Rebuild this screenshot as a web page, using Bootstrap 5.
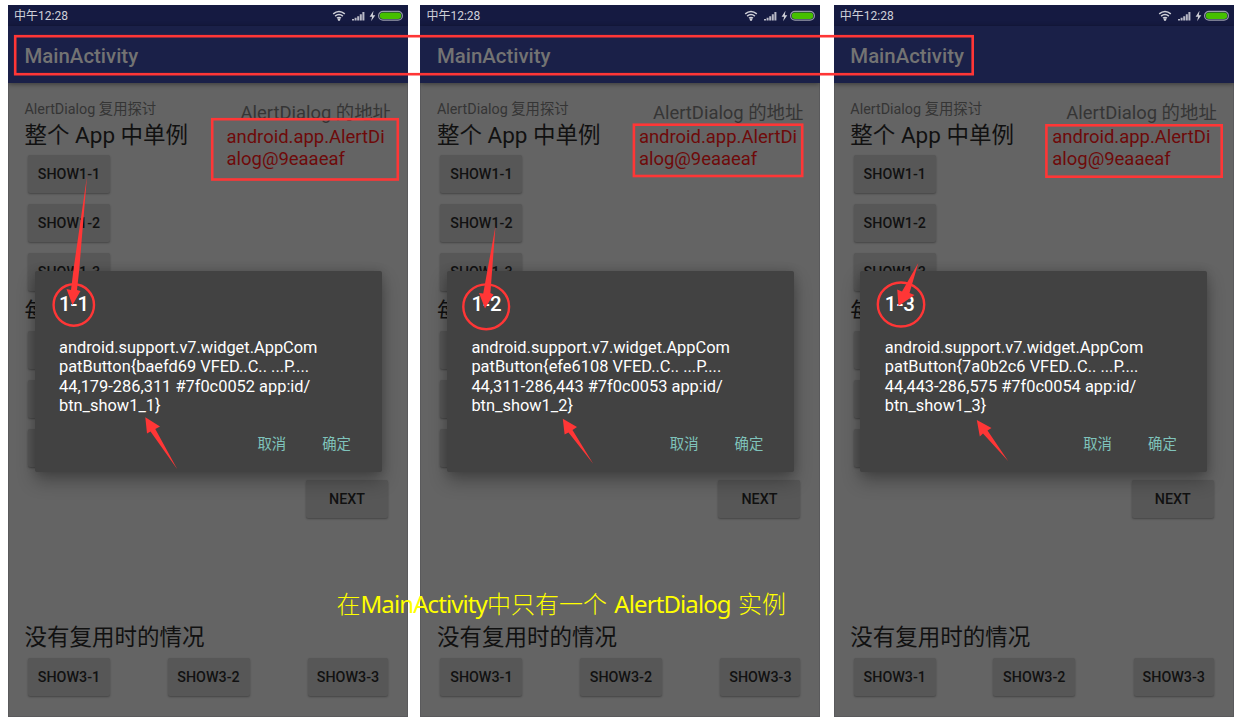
<!DOCTYPE html>
<html lang="zh-CN">
<head>
<meta charset="utf-8">
<meta name="viewport" content="width=device-width, initial-scale=1">
<title>MainActivity</title>
<link href="https://cdn.jsdelivr.net/npm/bootstrap@5.3.0/dist/css/bootstrap.min.css" rel="stylesheet">
<style>
body{background:#fff;font-family:Roboto,"Noto Sans CJK SC",sans-serif;color:#111;height:725px;overflow:hidden}
.board{width:1240px;height:725px;padding:5px 0 0 8px;gap:13px}
.phone{width:400px;height:712px;background:#646464;flex:none;overflow:hidden;box-shadow:inset 0 0 0 1px #5a5a5c}
.phone-b{margin:0 .4px 0 -.6px}
.statusbar{height:21px;background:#151a41;color:#cfd0d8;font-size:12px;line-height:21px;padding:1px 4px 0 6px}
.appbar{height:57px;background:#1a2048;color:#737373;font-size:20.4px;font-weight:500;padding:2px 16.5px 0;box-shadow:0 1px 5px rgba(0,0,0,.45)}
.appbar div{line-height:57px}
.content{height:634px;padding:17px 17px 0 16.5px}
.upper{height:522px}
.caption-t{font-size:14.35px;line-height:20px;height:20px;color:#353535}
.heading-t{font-size:22.5px;line-height:30px;height:32px;white-space:nowrap}
.each-t{line-height:32px;margin-top:4px}
.abtn{display:block;width:82px;height:38px;border:0;border-radius:2px;background:#575757;color:#111;font-size:14.3px;font-weight:500;line-height:38px;padding:0;text-align:center;box-shadow:0 1px 2px rgba(0,0,0,.32)}
.stack{gap:11px;padding:3px 0 0 3.5px}
.addr-t{font-size:18.4px;line-height:21px;color:#353535;text-align:right;white-space:nowrap;margin:2px 0 0}
.addr{font-size:18.45px;line-height:21.5px;color:#6e0a0a;width:164.5px;margin:4px 0 0 auto}
.rightcol{width:170px}
.next-b{margin-right:3px;margin-bottom:104.5px}
.lower{padding:4px 3px 0 3.5px}
.lower .abtn:last-child{width:80px}
.lower .abtn:nth-child(2){margin-left:-1px}
.dialog-a{position:absolute;left:26.5px;top:266px;width:347px;height:200.5px;background:#424242;border-radius:2px;color:#fff;padding:19px 30.5px 0 24.5px;box-shadow:0 9px 18px rgba(0,0,0,.3),0 0 10px rgba(0,0,0,.16)}
.dialog-a h2{font-size:20.4px;font-weight:500;line-height:28px;margin:0 0 20px}
.dialog-a p{font-size:16.4px;line-height:19.25px;margin:0;white-space:nowrap}
.actions{gap:36px;font-size:14.4px;line-height:20px;color:#7fc3bb;margin-top:19.5px}
.notes{position:absolute;left:0;top:0;pointer-events:none}
.banner{position:absolute;left:336.5px;top:587px;color:#ff0;font-size:24px;line-height:32px;white-space:nowrap;letter-spacing:-.9px;font-family:"Noto Sans","Noto Sans CJK SC",sans-serif}
.banner i{font-style:normal;font-weight:300;letter-spacing:0;word-spacing:2px;font-family:"Noto Sans CJK SC",sans-serif}
</style>
</head>
<body>
<svg width="0" height="0" class="position-absolute">
<symbol id="sys" viewBox="0 0 72 14">
<g fill="none" stroke="#cfd0d8" stroke-width="1.5"><path d="M1.2 4.9Q7 .2 12.8 4.9"/><path d="M3.1 7.1Q7 3.9 10.9 7.1"/><path d="M5 9.2Q7 7.6 9 9.2"/></g><circle cx="7" cy="10.6" r="1.3" fill="#cfd0d8"/>
<path d="M20 11.5V10H22V11.5ZM22.6 11.5V8.7H24.6V11.5ZM25.2 11.5V7.2H27.2V11.5ZM27.8 11.5V5.2H29.8V11.5ZM30.4 11.5V3H32.4V11.5Z" fill="#b9bac7"/>
<path d="M41.5 1.8L37.6 7.8H40.1L39.1 12.2L43.3 6.2H40.8Z" fill="#cfd0d8"/>
<rect x="46.6" y="2.4" width="23.8" height="8.8" rx="4.4" fill="#151a41" stroke="#9a9dac" stroke-width="1.2"/><rect x="47.8" y="3.6" width="21.4" height="6.4" rx="3.2" fill="#46c000"/>
</symbol>
</svg>
<main class="board d-flex position-relative">
<section class="phone position-relative">
<div class="statusbar d-flex justify-content-between align-items-center"><span>中午12:28</span><svg width="72" height="14"><use href="#sys"/></svg></div>
<header class="appbar position-relative"><div>MainActivity</div></header>
<div class="content"><div class="upper d-flex justify-content-between position-relative">
<div><div class="caption-t">AlertDialog 复用探讨</div><div class="heading-t">整个 App 中单例</div>
<div class="stack d-flex flex-column"><button class="abtn">SHOW1-1</button><button class="abtn">SHOW1-2</button><button class="abtn">SHOW1-3</button></div>
<div class="heading-t each-t">每</div><div class="stack d-flex flex-column pt-1"><button class="abtn"></button><button class="abtn"></button><button class="abtn"></button></div></div>
<div class="rightcol d-flex flex-column"><div class="addr-t">AlertDialog 的地址</div><div class="addr">android.app.AlertDi<br>alog@9eaaeaf</div><button class="abtn ms-auto mt-auto next-b">NEXT</button></div>
</div>
<div class="heading-t">没有复用时的情况</div>
<div class="lower d-flex justify-content-between"><button class="abtn">SHOW3-1</button><button class="abtn">SHOW3-2</button><button class="abtn">SHOW3-3</button></div></div>
<div class="dialog-a"><h2>1-1</h2><p>android.support.v7.widget.AppCom<br>patButton{baefd69 VFED..C.. ...P....<br>44,179-286,311 #7f0c0052 app:id/<br>btn_show1_1}</p><div class="actions d-flex justify-content-end"><span>取消</span><span>确定</span></div></div>
</section>
<section class="phone phone-b position-relative">
<div class="statusbar d-flex justify-content-between align-items-center"><span>中午12:28</span><svg width="72" height="14"><use href="#sys"/></svg></div>
<header class="appbar position-relative"><div>MainActivity</div></header>
<div class="content"><div class="upper d-flex justify-content-between position-relative">
<div><div class="caption-t">AlertDialog 复用探讨</div><div class="heading-t">整个 App 中单例</div>
<div class="stack d-flex flex-column"><button class="abtn">SHOW1-1</button><button class="abtn">SHOW1-2</button><button class="abtn">SHOW1-3</button></div>
<div class="heading-t each-t">每</div><div class="stack d-flex flex-column pt-1"><button class="abtn"></button><button class="abtn"></button><button class="abtn"></button></div></div>
<div class="rightcol d-flex flex-column"><div class="addr-t">AlertDialog 的地址</div><div class="addr">android.app.AlertDi<br>alog@9eaaeaf</div><button class="abtn ms-auto mt-auto next-b">NEXT</button></div>
</div>
<div class="heading-t">没有复用时的情况</div>
<div class="lower d-flex justify-content-between"><button class="abtn">SHOW3-1</button><button class="abtn">SHOW3-2</button><button class="abtn">SHOW3-3</button></div></div>
<div class="dialog-a"><h2>1-2</h2><p>android.support.v7.widget.AppCom<br>patButton{efe6108 VFED..C.. ...P....<br>44,311-286,443 #7f0c0053 app:id/<br>btn_show1_2}</p><div class="actions d-flex justify-content-end"><span>取消</span><span>确定</span></div></div>
</section>
<section class="phone position-relative">
<div class="statusbar d-flex justify-content-between align-items-center"><span>中午12:28</span><svg width="72" height="14"><use href="#sys"/></svg></div>
<header class="appbar position-relative"><div>MainActivity</div></header>
<div class="content"><div class="upper d-flex justify-content-between position-relative">
<div><div class="caption-t">AlertDialog 复用探讨</div><div class="heading-t">整个 App 中单例</div>
<div class="stack d-flex flex-column"><button class="abtn">SHOW1-1</button><button class="abtn">SHOW1-2</button><button class="abtn">SHOW1-3</button></div>
<div class="heading-t each-t">每</div><div class="stack d-flex flex-column pt-1"><button class="abtn"></button><button class="abtn"></button><button class="abtn"></button></div></div>
<div class="rightcol d-flex flex-column"><div class="addr-t">AlertDialog 的地址</div><div class="addr">android.app.AlertDi<br>alog@9eaaeaf</div><button class="abtn ms-auto mt-auto next-b">NEXT</button></div>
</div>
<div class="heading-t">没有复用时的情况</div>
<div class="lower d-flex justify-content-between"><button class="abtn">SHOW3-1</button><button class="abtn">SHOW3-2</button><button class="abtn">SHOW3-3</button></div></div>
<div class="dialog-a"><h2>1-3</h2><p>android.support.v7.widget.AppCom<br>patButton{7a0b2c6 VFED..C.. ...P....<br>44,443-286,575 #7f0c0054 app:id/<br>btn_show1_3}</p><div class="actions d-flex justify-content-end"><span>取消</span><span>确定</span></div></div>
</section>
<svg class="notes" width="1240" height="725" viewBox="0 0 1240 725">
<g fill="none" stroke="#ff3636" stroke-width="2.6">
<rect x="15.2" y="36.2" width="957.5" height="38"/>
<rect x="212.2" y="119.2" width="185.6" height="60.3"/><rect x="633.9" y="124.7" width="168.3" height="51.3"/><rect x="1046.4" y="125.3" width="175.3" height="51.4"/>
</g>
<g fill="none" stroke="#ff3636" stroke-width="2.4"><ellipse cx="73.8" cy="305" rx="20.2" ry="20.7"/><ellipse cx="486.2" cy="306.8" rx="22.9" ry="22.4"/><ellipse cx="901" cy="304.5" rx="23.2" ry="22"/></g>
<g fill="#ff3636">
<path d="M87 176L79.2 270L77 290L80.5 291L72.5 305L66.5 289L71 290L73.7 268Z"/>
<path d="M495.5 226L490.4 293L493.5 294.5L485 308.5L479 293L483.2 293.5Z"/>
<path d="M918.3 263L909.5 293L914.5 295L898.5 306L897.2 289.5L902 291.5Z"/>
<path d="M145.3 417.2L160 426.5L155.3 429L177.3 469.3L150.5 431.5L147 433.5Z"/>
<path d="M562.8 418.8L577 427L572.5 430L593.2 463.7L568.5 432.5L564.6 434.5Z"/>
<path d="M976.8 420L991.5 428L987.5 430.5L1008.3 461.3L983 433.5L979.8 436.5Z"/>
</g>
</svg>
<div class="banner"><i>在</i>MainActivity<i>中只有一个 </i>AlertDialog<i> 实例</i></div>
</main>
<script src="https://cdn.jsdelivr.net/npm/bootstrap@5.3.0/dist/js/bootstrap.bundle.min.js"></script>
</body>
</html>
